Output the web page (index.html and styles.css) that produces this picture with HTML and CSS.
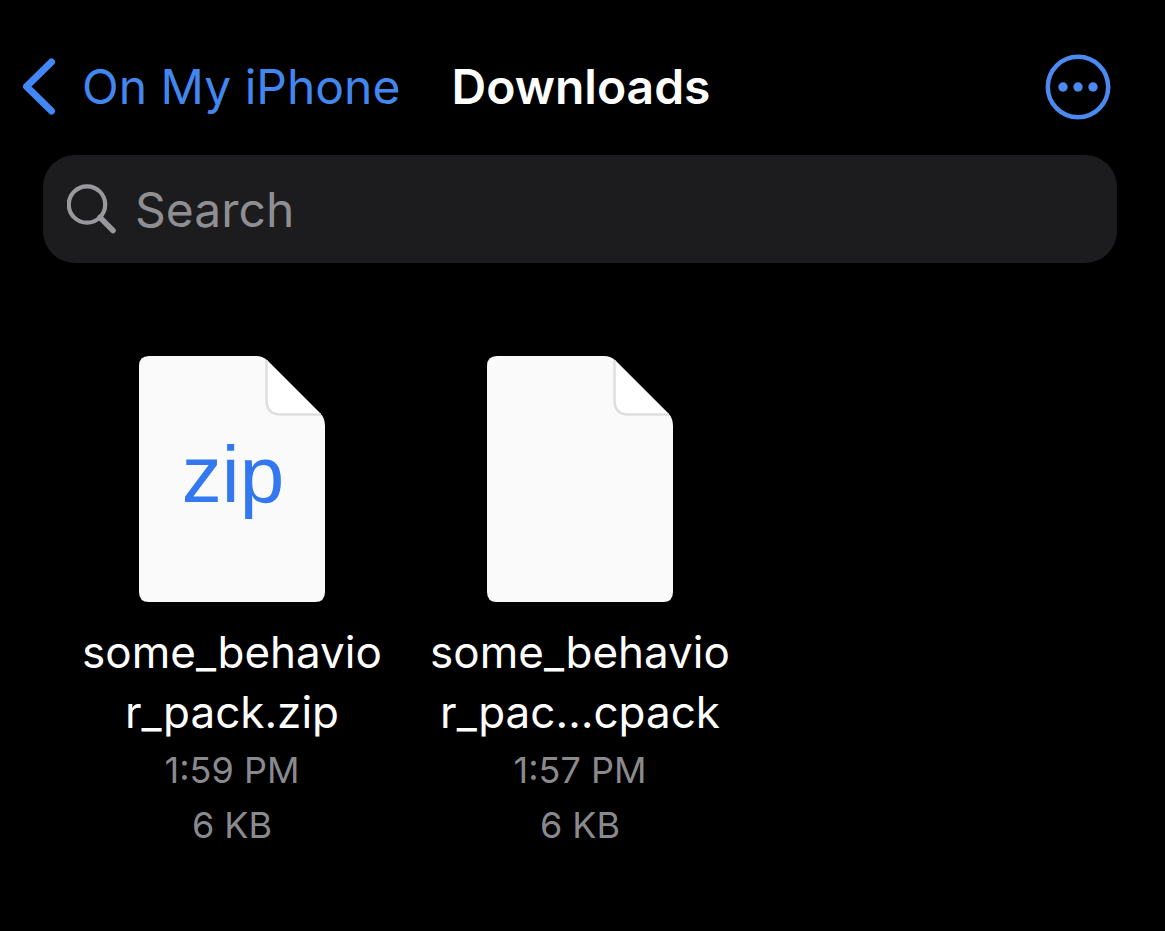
FILE: index.html
```html
<!DOCTYPE html>
<html lang="en">
<head>
<meta charset="utf-8">
<meta name="viewport" content="width=device-width, initial-scale=1">
<title>Downloads</title>
<link rel="stylesheet" href="styles.css">
</head>
<body>
<header class="nav">
  <a class="back" href="#">
    <svg class="back-icon" viewBox="0 0 36 60" aria-hidden="true"><path d="M30.500 5 L5.500 29.500 L30.500 54"/></svg>
    <span>On My iPhone</span>
  </a>
  <h1 class="title">Downloads</h1>
  <button class="more" type="button" aria-label="More options">
    <svg class="more-icon" viewBox="0 0 66 66" aria-hidden="true">
      <circle class="ring" cx="33" cy="33" r="30.200"/>
      <circle cx="18" cy="33" r="4.700"/><circle cx="33" cy="33" r="4.700"/><circle cx="48" cy="33" r="4.700"/>
    </svg>
  </button>
</header>
<main class="content">
  <label class="search">
    <svg class="search-icon" viewBox="0 0 50 50" aria-hidden="true"><circle cx="20" cy="20.500" r="18.200"/><path class="handle" d="M33 33.500 L46 46.500"/></svg>
    <input class="search-input" type="search" placeholder="Search" aria-label="Search">
  </label>
  <ul class="files">
    <li class="file">
      <svg class="doc" viewBox="0 0 186 246" aria-hidden="true">
        <path class="sheet" d="M10 0 H117 Q124 0 129 5 L181 57 Q186 62 186 70 V236 Q186 246 176 246 H10 Q0 246 0 236 V10 Q0 0 10 0 Z"/>
        <path class="fold" d="M127.500 4 V44 Q127.500 58.500 142 58.500 H182"/>
        <text class="ext" x="94" y="146">zip</text>
      </svg>
      <span class="name">some_behavio<wbr>r_pack.zip</span>
      <span class="meta">1:59 PM</span>
      <span class="meta">6 KB</span>
    </li>
    <li class="file">
      <svg class="doc" viewBox="0 0 186 246" aria-hidden="true">
        <path class="sheet" d="M10 0 H117 Q124 0 129 5 L181 57 Q186 62 186 70 V236 Q186 246 176 246 H10 Q0 246 0 236 V10 Q0 0 10 0 Z"/>
        <path class="fold" d="M127.500 4 V44 Q127.500 58.500 142 58.500 H182"/>
      </svg>
      <span class="name">some_behavio<wbr>r_pac…cpack</span>
      <span class="meta">1:57 PM</span>
      <span class="meta">6 KB</span>
    </li>
  </ul>
</main>
</body>
</html>
```
FILE: styles.css
```css
* { box-sizing: border-box; }

body {
  margin: 0;
  background: #000;
  color: #fff;
  font-family: Inter, "Liberation Sans", sans-serif;
}

.nav {
  display: grid;
  grid-template-columns: 1fr auto 1fr;
  align-items: center;
  padding: 54px 24px 35px 21px;
}

.back {
  display: flex;
  align-items: center;
  gap: 25px;
  color: #4287f0;
  font-size: 48px;
  line-height: 60px;
  white-space: nowrap;
  text-decoration: none;
}

.back-icon {
  width: 36px;
  height: 60px;
  flex: none;
  fill: none;
  stroke: #4287f5;
  stroke-width: 7;
  stroke-linecap: round;
  stroke-linejoin: round;
}

.title {
  margin: 0;
  font-size: 48px;
  line-height: 60px;
  font-weight: 600;
}

.more {
  justify-self: end;
  margin-right: 30px;
  padding: 0;
  border: 0;
  background: none;
}

.more-icon {
  display: block;
  width: 66px;
  height: 66px;
  fill: #4b8af0;
}

.ring {
  fill: none;
  stroke: #4b8af0;
  stroke-width: 4.500;
}

.content { padding: 0 48px 0 43px; }

.search {
  display: flex;
  align-items: center;
  gap: 18px;
  height: 108px;
  padding: 0 24px;
  border-radius: 32px;
  background: #1c1c1e;
}

.search-icon {
  width: 50px;
  height: 50px;
  flex: none;
  fill: none;
  stroke: #98989d;
  stroke-width: 4.200;
  stroke-linecap: round;
}

.handle { stroke-width: 5.500; }

.search-input {
  flex: 1;
  min-width: 0;
  padding: 2px 0 0;
  border: 0;
  outline: 0;
  background: none;
  color: #fff;
  font: 48px/60px Inter, "Liberation Sans", sans-serif;
}

.search-input::placeholder { color: #8e8e93; opacity: 1; }

.files {
  display: grid;
  grid-template-columns: repeat(3, 1fr);
  margin: 0;
  padding: 93px 15px 40px;
  list-style: none;
}

.file {
  display: flex;
  flex-direction: column;
  align-items: center;
  text-align: center;
}

.doc {
  width: 186px;
  height: 246px;
  margin-bottom: 20px;
}

.sheet { fill: #fafafa; }

.fold {
  fill: #fff;
  stroke: #dedede;
  stroke-width: 2.500;
}

.ext {
  fill: #3478f0;
  font-family: "Liberation Sans", sans-serif;
  font-size: 80px;
  text-anchor: middle;
}

.name {
  max-width: 320px;
  margin-bottom: 1px;
  font-size: 44px;
  line-height: 60px;
}

.meta {
  color: #8a8a8e;
  font-size: 36px;
  line-height: 55px;
}
```
